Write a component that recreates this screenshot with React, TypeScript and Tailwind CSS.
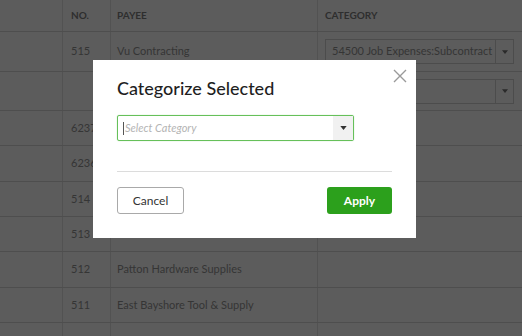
import React from 'react';

const rows = [
  { no: '515', payee: 'Vu Contracting', category: '54500 Job Expenses:Subcontract', h: 'h-[40px]' },
  { no: '', payee: '', category: '', select: true, h: 'h-[39px]' },
  { no: '6237', payee: '', h: 'h-[35px]' },
  { no: '6236', payee: '', h: 'h-[36px]' },
  { no: '514', payee: '', h: 'h-[35px]' },
  { no: '513', payee: '', h: 'h-[35px]' },
  { no: '512', payee: 'Patton Hardware Supplies', h: 'h-[36px]' },
  { no: '511', payee: 'East Bayshore Tool & Supply', h: 'h-[35px]' },
  { no: '', payee: '', h: 'h-[35px]' },
];

function Caret({ className }: { className: string }) {
  return (
    <svg width="8" height="5" viewBox="0 0 8 5" className={className}>
      <path d="M0 0h8L4 5z" fill="currentColor" />
    </svg>
  );
}

export default function App() {
  return (
    <div className="relative w-[522px] h-[336px] overflow-hidden bg-[#5c5c5c] font-['Lato','Liberation_Sans',sans-serif] text-[#353535]">
      {/* dimmed table behind the dialog */}
      <div className="grid grid-cols-[63px_48px_207px_1fr] h-[32px] border-b border-[#4e4e4e] text-[10px] font-bold text-[#2e2e2e]">
        <div className="border-r border-[#525252]" />
        <div className="border-r border-[#525252] flex items-center pl-2">NO.</div>
        <div className="border-r border-[#525252] flex items-center pl-[6px]">PAYEE</div>
        <div className="flex items-center pl-[7px]">CATEGORY</div>
      </div>
      {rows.map((r, i) => (
        <div key={i} className={`grid grid-cols-[63px_48px_207px_1fr] ${r.h} border-b border-[#4e4e4e] text-[11px]`}>
          <div className="border-r border-[#525252]" />
          <div className="border-r border-[#525252] flex items-center pl-2">{r.no}</div>
          <div className="border-r border-[#525252] flex items-center pl-[6px]">{r.payee}</div>
          <div className="flex items-center pl-[7px] pr-[8px]">
            {(r.category !== undefined) && (
              <div className="flex h-[25px] w-full border border-[#4c4c4c]">
                <div className="flex-1 flex items-center pl-[6px] whitespace-nowrap overflow-hidden">{r.category}</div>
                <div className="w-[18px] border-l border-[#4c4c4c] flex items-center justify-center">
                  <Caret className="text-[#2a2a2a] w-[6px] h-[4px]" />
                </div>
              </div>
            )}
          </div>
        </div>
      ))}

      {/* dialog */}
      <div className="absolute left-[93px] top-[60px] w-[323px] h-[178px] bg-white px-6 pt-[16px]">
        <button className="absolute right-[9px] top-[8px] w-[15px] h-[15px] flex items-center justify-center text-[#9a9a9a]">
          <svg width="14" height="14" viewBox="0 0 14 14">
            <path d="M1 1l12 12M13 1L1 13" stroke="currentColor" strokeWidth="1.4" />
          </svg>
        </button>
        <h2 className="text-[18px] leading-[24px] font-medium text-[#1f1f1f]">Categorize Selected</h2>
        <div className="mt-[15px] flex w-[237px] h-[26px] border border-[#66c05a] rounded-[2px] shadow-[0_0_1px_#8fd686]">
          <div className="flex-1 flex items-center pl-[5px] text-[11px] italic text-[#b4b4b4]">
            <span className="w-px h-[13px] bg-[#555] mr-[1px]" />
            Select Category
          </div>
          <div className="w-[20px] bg-[#f1f1f1] flex items-center justify-center">
            <Caret className="text-[#333] w-[7px] h-[4px]" />
          </div>
        </div>
        <div className="mt-[30px] h-px bg-[#dcdcdc]" />
        <div className="mt-[15px] flex justify-between">
          <button className="w-[67px] h-[27px] border border-[#a9a9a9] rounded-[3px] text-[12px] text-[#333]">Cancel</button>
          <button className="w-[65px] h-[27px] bg-[#2ca01c] rounded-[3px] text-[12px] font-bold text-white">Apply</button>
        </div>
      </div>
    </div>
  );
}
